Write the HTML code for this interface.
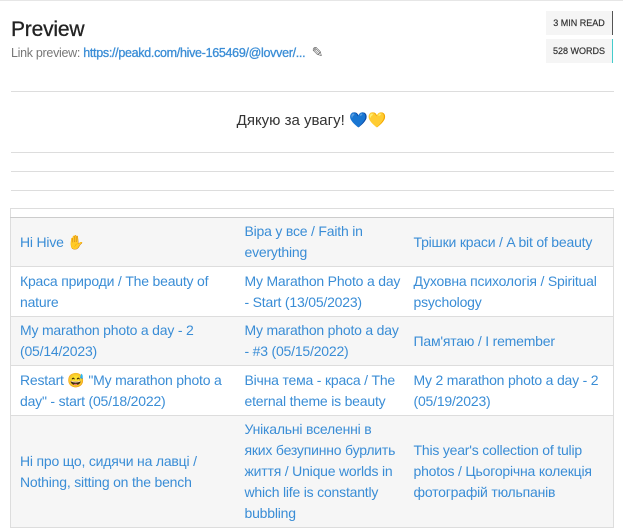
<!DOCTYPE html>
<html><head><meta charset="utf-8"><style>
body{margin:0;width:623px;height:530px;background:#fff;font-family:"Liberation Sans","Noto Sans CJK SC",sans-serif;position:relative;overflow:hidden}
.top{position:absolute;left:0;top:0;width:623px;height:1px;background:#e6e6e6}
h1{position:absolute;left:11px;top:18px;margin:0;font-size:21px;font-weight:normal;color:#222;letter-spacing:-0.2px;-webkit-text-stroke:0.3px #222}
.lp{position:absolute;left:11px;top:44px;font-size:12.5px;color:#777;letter-spacing:-0.3px;white-space:nowrap}
.lp a{color:#3a8dd6;text-decoration:none;-webkit-text-stroke:0.3px #3a8dd6}
.badge{position:absolute;left:546px;width:66px;height:24px;background:#f5f5f5;font-size:9px;color:#333;text-align:center;line-height:24px;border-right:1px solid #555;-webkit-text-stroke:0.2px #333}
.hr{position:absolute;left:11px;width:603px;height:1px;background:#ddd}
.thx{position:absolute;left:0;width:623px;top:111px;text-align:center;font-size:15px;color:#333}
table{position:absolute;left:10px;top:208px;width:604px;border-collapse:collapse;font-size:14px;letter-spacing:-0.2px;line-height:21px}
td{border-top:1px solid #ddd;padding:0 0 0 9px;color:#3a8dd6;vertical-align:middle;white-space:nowrap}
tr.g td{background:#f6f6f6}
.hd td{height:8px;border-top:1px solid #ddd;border-bottom:1px solid #ccc;background:#fff}
table{border-left:1px solid #ddd;border-right:1px solid #ddd;border-bottom:1px solid #ddd}
</style></head><body>
<div class="top"></div>
<h1>Preview</h1>
<div class="lp">Link preview: <a>https://peakd.com/hive-165469/@lovver/...</a> &nbsp;<span style="color:#666;font-size:14px">&#9998;</span></div>
<div class="badge" style="top:11px">3 MIN READ</div>
<div class="badge" style="top:39px;border-right-color:#4cc">528 WORDS</div>
<div class="hr" style="top:91px"></div>
<div class="thx">Дякую за увагу! <span style="color:#1a6fd0">&#x1F499;</span><span style="color:#f2d600">&#x1F49B;</span></div>
<div class="hr" style="top:152px"></div>
<div class="hr" style="top:171px"></div>
<div class="hr" style="top:190px"></div>
<table>
<colgroup><col style="width:225px"><col style="width:169px"><col></colgroup>
<tr class="hd"><td></td><td></td><td></td></tr>
<tr class="g" style="height:49px"><td>Hi Hive <span style="color:#e0a020">&#x270B;</span></td><td>Віра у все / Faith in<br>everything</td><td>Трішки краси / A bit of beauty</td></tr>
<tr style="height:50px"><td>Краса природи / The beauty of<br>nature</td><td>My Marathon Photo a day<br>- Start (13/05/2023)</td><td>Духовна психологія / Spiritual<br>psychology</td></tr>
<tr class="g" style="height:49px"><td>My marathon photo a day - 2<br>(05/14/2023)</td><td>My marathon photo a day<br>- #3 (05/15/2022)</td><td>Пам'ятаю / I remember</td></tr>
<tr style="height:50px"><td>Restart <span style="color:#e0a020">&#x1F605;</span> "My marathon photo a<br>day" - start (05/18/2022)</td><td>Вічна тема - краса / The<br>eternal theme is beauty</td><td>My 2 marathon photo a day - 2<br>(05/19/2023)</td></tr>
<tr class="g" style="height:112px"><td>Ні про що, сидячи на лавці /<br>Nothing, sitting on the bench</td><td>Унікальні вселенні в<br>яких безупинно бурлить<br>життя / Unique worlds in<br>which life is constantly<br>bubbling</td><td>This year's collection of tulip<br>photos / Цьогорічна колекція<br>фотографій тюльпанів</td></tr>
</table>
</body></html>
